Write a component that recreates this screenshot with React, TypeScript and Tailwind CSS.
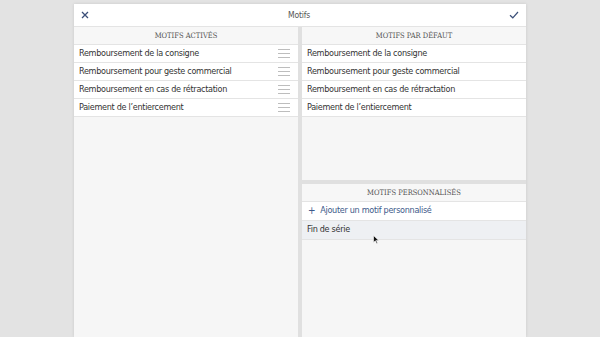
import React from 'react';

// Motifs editor: active reasons on the left, default + custom reasons on the right
const activeMotifs = [
  'Remboursement de la consigne',
  'Remboursement pour geste commercial',
  'Remboursement en cas de rétractation',
  'Paiement de l’entiercement',
];

const defaultMotifs = [...activeMotifs];

const rowFont = { fontFamily: '"DejaVu Sans Condensed", "Liberation Sans", sans-serif' };
const headFont = { fontFamily: '"DejaVu Serif Condensed", "DejaVu Serif", serif' };

function SectionHeader({ title }: { title: string }) {
  return (
    <div
      className="h-[18px] flex items-center justify-center bg-[#f7f7f7] border-b border-[#e4e4e4] text-[7.5px] text-[#555] uppercase"
      style={headFont}
    >
      {title}
    </div>
  );
}

function Handle() {
  return (
    <svg width="12" height="9" viewBox="0 0 12 9" className="shrink-0">
      <path d="M0 0.5h12M0 4.5h12M0 8.5h12" stroke="#bdbdbd" strokeWidth="1" />
    </svg>
  );
}

function Row({ label, handle }: { label: string; handle?: boolean }) {
  return (
    <div
      className="h-[18px] flex items-center justify-between bg-white border-b border-[#e4e4e4] pl-[5px] pr-[8px] text-[9px] tracking-[-0.3px] text-[#333]"
      style={rowFont}
    >
      <span>{label}</span>
      {handle && <Handle />}
    </div>
  );
}

export default function App() {
  return (
    <div className="h-[337px] w-[600px] overflow-hidden bg-[#e3e3e3] pl-[74px] pr-[74px] pt-[4px]">
      <div className="h-full bg-white flex flex-col shadow-[0_0_3px_rgba(0,0,0,0.12)]">
        {/* Header */}
        <div className="h-[23px] flex items-center justify-between px-[7px] border-b border-[#e4e4e4]">
          <svg width="8" height="8" viewBox="0 0 8 8">
            <path d="M1 1l6 6M7 1l-6 6" stroke="#3b4f78" strokeWidth="1.3" />
          </svg>
          <span className="text-[8.5px] tracking-[-0.2px] text-[#555]" style={rowFont}>Motifs</span>
          <svg width="10" height="8" viewBox="0 0 10 8">
            <path d="M1 4.2l2.8 2.6L9 1" fill="none" stroke="#3b4f78" strokeWidth="1.2" />
          </svg>
        </div>

        {/* Body */}
        <div className="flex-1 flex gap-[4px] bg-[#e0e0e0]">
          <div className="w-[224px] flex flex-col bg-[#f6f6f6]">
            <SectionHeader title="Motifs activés" />
            {activeMotifs.map((m) => (
              <Row key={m} label={m} handle />
            ))}
          </div>

          <div className="flex-1 flex flex-col gap-[4px]">
            <div className="h-[153px] flex flex-col bg-[#f6f6f6]">
              <SectionHeader title="Motifs par défaut" />
              {defaultMotifs.map((m) => (
                <Row key={m} label={m} />
              ))}
            </div>

            <div className="flex-1 flex flex-col bg-[#f6f6f6] relative">
              <SectionHeader title="Motifs personnalisés" />
              <div
                className="h-[19px] flex items-center gap-[5px] bg-white border-b border-[#e4e4e4] pl-[6px] text-[9px] tracking-[-0.3px] text-[#3d5a8a]"
                style={rowFont}
              >
                <span className="text-[10px] leading-none">+</span>
                <span>Ajouter un motif personnalisé</span>
              </div>
              <div
                className="h-[19px] flex items-center bg-[#eef0f3] border-b border-[#e4e4e4] pl-[5px] text-[9px] tracking-[-0.3px] text-[#333] font-medium"
                style={rowFont}
              >
                Fin de série
              </div>
              {/* mouse pointer */}
              <svg width="6" height="9" viewBox="0 0 6 9" className="absolute left-[71px] top-[51px]">
                <path d="M0.5 0.5v7l1.8-1.7 1.3 2.7 1-0.5-1.3-2.6h2.4z" fill="#111" stroke="#fff" strokeWidth="0.6" />
              </svg>
            </div>
          </div>
        </div>
      </div>
    </div>
  );
}
